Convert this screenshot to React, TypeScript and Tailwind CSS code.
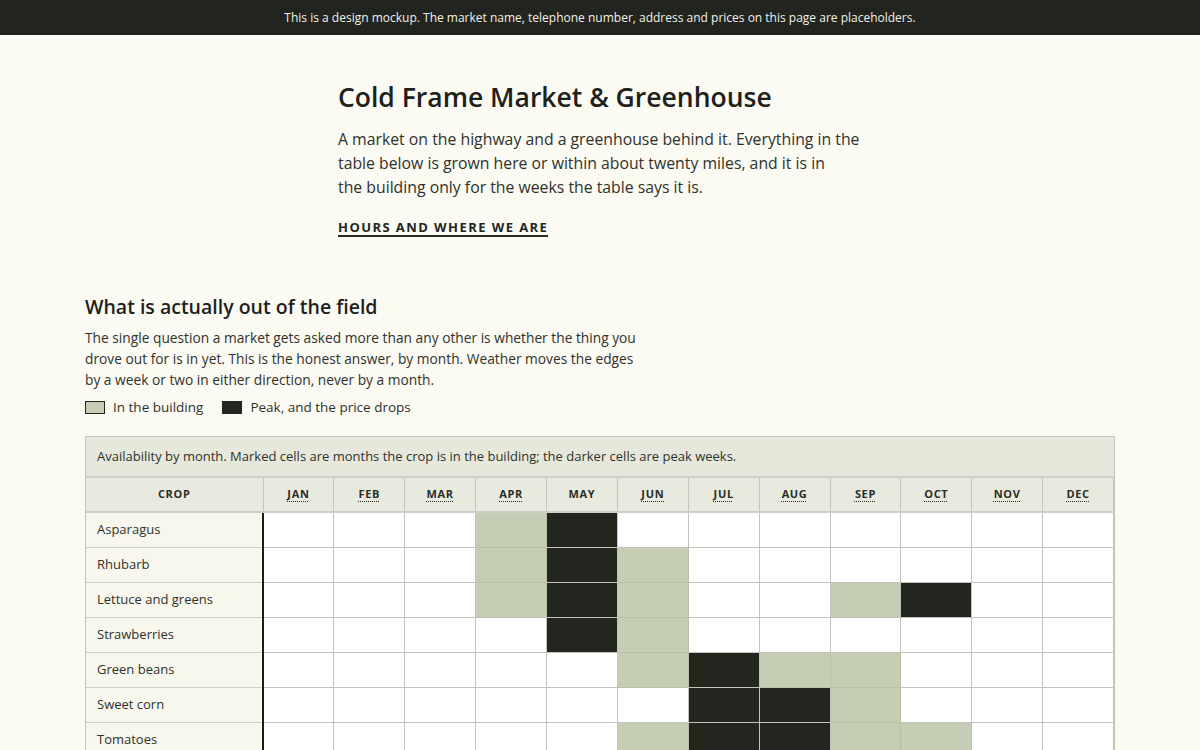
// Seasonal availability page for a roadside market — the month grid is the point.

const MONTHS = [
  { abbr: "JAN", full: "January" },
  { abbr: "FEB", full: "February" },
  { abbr: "MAR", full: "March" },
  { abbr: "APR", full: "April" },
  { abbr: "MAY", full: null },
  { abbr: "JUN", full: "June" },
  { abbr: "JUL", full: "July" },
  { abbr: "AUG", full: "August" },
  { abbr: "SEP", full: "September" },
  { abbr: "OCT", full: "October" },
  { abbr: "NOV", full: "November" },
  { abbr: "DEC", full: "December" },
];

// 0 = not in, 1 = in the building, 2 = peak
const CROPS: { name: string; months: number[] }[] = [
  { name: "Asparagus", months: [0, 0, 0, 1, 2, 0, 0, 0, 0, 0, 0, 0] },
  { name: "Rhubarb", months: [0, 0, 0, 1, 2, 1, 0, 0, 0, 0, 0, 0] },
  { name: "Lettuce and greens", months: [0, 0, 0, 1, 2, 1, 0, 0, 1, 2, 0, 0] },
  { name: "Strawberries", months: [0, 0, 0, 0, 2, 1, 0, 0, 0, 0, 0, 0] },
  { name: "Green beans", months: [0, 0, 0, 0, 0, 1, 2, 1, 1, 0, 0, 0] },
  { name: "Sweet corn", months: [0, 0, 0, 0, 0, 0, 2, 2, 1, 0, 0, 0] },
  { name: "Tomatoes", months: [0, 0, 0, 0, 0, 1, 2, 2, 1, 1, 0, 0] },
];

const cellTone = ["bg-white", "bg-[#c5cdb5]", "bg-[#22261f]"];

function Legend() {
  return (
    <div className="mt-[7px] flex h-[21px] items-center gap-[19px] text-[13.5px] text-[#2f322b]">
      <span className="flex items-center gap-2">
        <span className="inline-block h-[13px] w-[20px] border border-[#22261f] bg-[#c5cdb5]" />
        In the building
      </span>
      <span className="flex items-center gap-2">
        <span className="inline-block h-[13px] w-[20px] border border-[#22261f] bg-[#22261f]" />
        Peak, and the price drops
      </span>
    </div>
  );
}

function SeasonTable() {
  return (
    <div className="mt-[18px] border border-[#c4c5b9]">
      <div className="bg-[#e6e8dc] px-[11px] py-[10px] text-[13px] leading-[19px] text-[#2f322b]">
        Availability by month. Marked cells are months the crop is in the building; the darker
        cells are peak weeks.
      </div>
      <table className="w-full table-fixed border-collapse">
        <colgroup>
          <col className="w-[177px]" />
          {MONTHS.map((m) => (
            <col key={m.abbr} />
          ))}
        </colgroup>
        <thead>
          <tr className="h-[35px] bg-[#e9eadf]">
            <th className="border-y-2 border-r border-y-[#cfd0c5] border-r-[#c4c5b9] text-center text-[11px] font-bold tracking-[0.06em] text-[#2a2d26]">
              CROP
            </th>
            {MONTHS.map((m) => (
              <th
                key={m.abbr}
                className="border-x border-y-2 border-x-[#c4c5b9] border-y-[#cfd0c5] text-center text-[11px] font-bold tracking-[0.06em] text-[#2a2d26]"
              >
                {m.full ? (
                  <abbr
                    title={m.full}
                    className="underline decoration-dotted decoration-1 underline-offset-[3px]"
                  >
                    {m.abbr}
                  </abbr>
                ) : (
                  m.abbr
                )}
              </th>
            ))}
          </tr>
        </thead>
        <tbody>
          {CROPS.map((c) => (
            <tr key={c.name} className="h-[35px]">
              <th
                scope="row"
                className="border-r-2 border-b border-b-[#cfd0c5] border-r-[#1b1d18] bg-[#f8f7ee] pl-[11px] text-left text-[13px] font-normal text-[#2f322b]"
              >
                {c.name}
              </th>
              {c.months.map((v, i) => (
                <td
                  key={i}
                  className={`border ${cellTone[v]} ${
                    v === 1 ? "border-[#b9c0aa]" : "border-[#c2c3bb]"
                  }`}
                />
              ))}
            </tr>
          ))}
        </tbody>
      </table>
    </div>
  );
}

export default function App() {
  return (
    <main className="min-h-screen bg-[#fbfaf3] font-['Open_Sans',sans-serif] text-[#2a2d26]">
      <div className="flex h-[35px] items-center justify-center bg-[#22251f] text-[12px] text-[#f1f0e7]">
        This is a design mockup. The market name, telephone number, address and prices on this
        page are placeholders.
      </div>

      <header className="mx-auto w-[524px] pt-[46px]">
        <h1 className="text-[26.5px] leading-[32px] font-semibold text-[#1e211b]">
          Cold Frame Market &amp; Greenhouse
        </h1>
        <p className="mt-[14px] w-[560px] text-[15.8px] leading-[24px] text-[#2f322b]">
          A market on the highway and a greenhouse behind it. Everything in the
          <br />
          table below is grown here or within about twenty miles, and it is in
          <br />
          the building only for the weeks the table says it is.
        </p>
        <a
          href="#hours"
          className="mt-[21px] inline-block border-b-2 border-[#2a2d26] text-[13px] leading-[15px] font-bold tracking-[0.11em] text-[#22251f]"
        >
          HOURS AND WHERE WE ARE
        </a>
      </header>

      <section className="mx-auto mt-[56px] w-[1030px] pb-10">
        <h2 className="text-[19.5px] leading-[26px] font-semibold text-[#1e211b]">
          What is actually out of the field
        </h2>
        <p className="mt-[7px] w-[600px] text-[13.75px] leading-[21px] text-[#2f322b]">
          The single question a market gets asked more than any other is whether the thing you
          <br />
          drove out for is in yet. This is the honest answer, by month. Weather moves the edges
          <br />
          by a week or two in either direction, never by a month.
        </p>
        <Legend />
        <SeasonTable />
      </section>
    </main>
  );
}
